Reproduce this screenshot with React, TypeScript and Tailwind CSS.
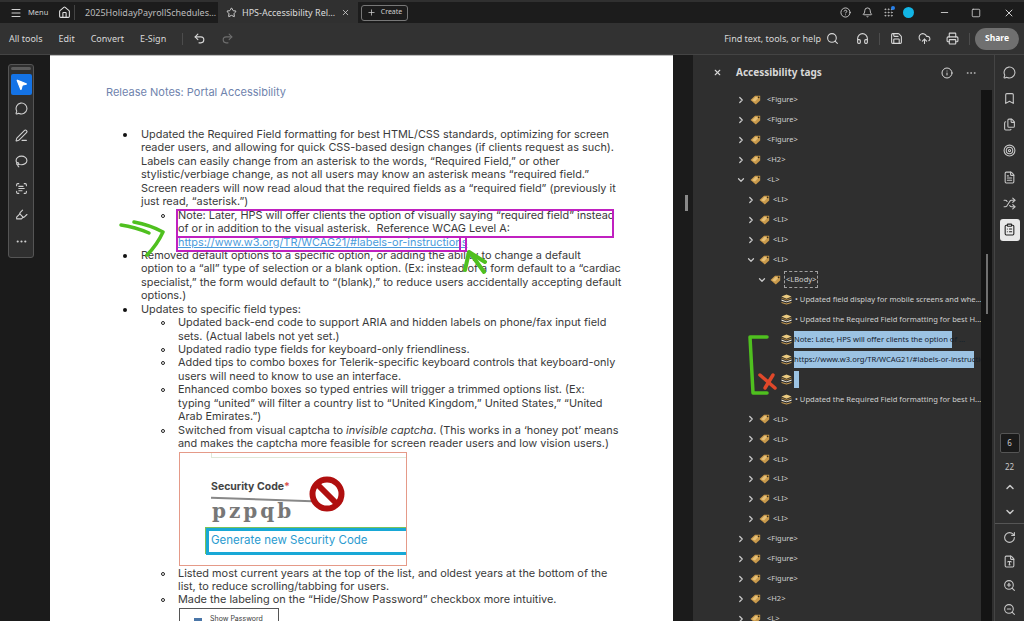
import {
  Bell, Bookmark, ChevronDown, ChevronRight, ChevronUp, CloudUpload, Ellipsis, FileText, Files, Grip,
  Headphones, Highlighter, Home, Info, Lasso, Menu, MessageCircle, Minus, MousePointer2, PenLine, Plus,
  Printer, RotateCw, Save, ScanText, Search, Square, Star, Target, Undo2, Redo2, X, ZoomIn, ZoomOut,
  CircleHelp, Shuffle, ClipboardList, FileType,
} from 'lucide-react'

const ui = "font-['Noto_Sans',sans-serif]"

function TagIcon() {
  return (
    <svg width="11" height="10" viewBox="0 0 11 10" className="shrink-0">
      <path d="M0.5 5 L5 0.8 H10.2 V5.4 L5.8 9.5 Z" fill="#c99a4b" />
      <path d="M2 5.2 L5.4 2 H9 L5 6.4 Z" fill="#e6c078" />
      <circle cx="8.6" cy="2.3" r="0.9" fill="#3a2c14" />
    </svg>
  )
}

function LeafIcon() {
  return (
    <svg width="11" height="11" viewBox="0 0 11 11" className="shrink-0">
      <path d="M0.5 2.6 L5.5 0.5 L10.5 2.6 L5.5 4.7 Z" fill="#eccb80" />
      <path d="M0.5 5.4 L5.5 7.4 L10.5 5.4 V6.8 L5.5 8.2 L0.5 6.8 Z" fill="#f2f0e6" />
      <path d="M0.5 8 L5.5 9.6 L10.5 8 V9 L5.5 10.6 L0.5 9 Z" fill="#c99a4b" />
      <path d="M0.5 3.4 L5.5 5.6 L10.5 3.4 V4.6 L5.5 6.6 L0.5 4.6 Z" fill="#a87f38" />
    </svg>
  )
}

function TreeRow({ label, level, open, dashed }: { label: string; level: 0 | 1 | 2; open?: boolean; dashed?: boolean }) {
  const pad = level === 0 ? 'pl-[43px] gap-[4px]' : level === 1 ? 'pl-[53px] gap-[3px]' : 'pl-[64px] gap-[3px]'
  return (
    <div className={`flex h-[19.96px] items-center ${pad}`}>
      {open ? (
        <ChevronDown className="h-[10px] w-[10px] shrink-0 text-[#c8c8c8]" strokeWidth={3} />
      ) : (
        <ChevronRight className="h-[10px] w-[10px] shrink-0 text-[#c8c8c8]" strokeWidth={3} />
      )}
      <TagIcon />
      <span
        className={`text-[7.5px] text-[#cfcfcf] ${level === 0 ? 'ml-[2px]' : ''} ${
          dashed ? 'border border-dashed border-[#a0a0a0] px-[1px] py-[2px]' : ''
        }`}
      >
        {label}
      </span>
    </div>
  )
}

function LeafRow({ label, selected, width }: { label: string; selected?: boolean; width?: string }) {
  return (
    <div className="flex h-[19.96px] items-center pl-[88px] gap-[2px]">
      <LeafIcon />
      {selected ? (
        <span className={`flex h-[17px] items-center whitespace-nowrap bg-[#9cc3e3] text-[7.6px] text-[#14202c] ${width}`}>
          {label}
        </span>
      ) : (
        <span className="whitespace-nowrap pl-[1px] text-[7.6px] text-[#cfcfcf]">{label}</span>
      )}
    </div>
  )
}

function Lines({ lines }: { lines: React.ReactNode[] }) {
  return (
    <>
      {lines.map((l, i) => (
        <div key={i} className="h-[13.45px] whitespace-pre leading-[13.45px]">
          {l}
        </div>
      ))}
    </>
  )
}

function Bullet({ lines }: { lines: React.ReactNode[] }) {
  return (
    <div className="relative pl-[91px]">
      <span className="absolute left-[73px] top-[5px] h-[4px] w-[4px] rounded-full bg-[#111]" />
      <Lines lines={lines} />
    </div>
  )
}

function Sub({ lines }: { lines: React.ReactNode[] }) {
  return (
    <div className="relative pl-[128px]">
      <span className="absolute left-[111px] top-[5px] h-[4px] w-[4px] rounded-full border border-[#222]" />
      <Lines lines={lines} />
    </div>
  )
}

function Captcha() {
  return (
    <div className="ml-[129px] mt-[1px] h-[114px] w-[228px] border border-[#e59a88] bg-white">
      <div className="relative h-full overflow-hidden pl-[31px] pt-[27px]">
        <div className="absolute left-[31px] top-0 h-[5px] w-[197px] border-b border-l border-[#dfe8d8]" />
        <div className="text-[10.5px] font-bold leading-[14px] text-[#444]">
          Security Code<span className="text-[#d9534f]">*</span>
        </div>
        <div className="relative mt-[3px] h-[30px] w-[130px]">
          <div className="absolute left-0 right-0 top-[2px] h-[2px] rotate-[2deg] bg-[#888]" />
          <div className="pl-[1px] font-['DejaVu_Serif',serif] text-[20px] font-bold leading-[28px] tracking-[3px] text-[#777]">
            pzpqb
          </div>
        </div>
        <div className="absolute bottom-[10px] left-[26px] flex h-[27px] w-[202px] items-center border-[3px] border-r-0 border-[#18a8d6] pl-[2px] text-[11.5px] text-[#2b9bd0] shadow-[-1px_-1px_0_#7cc35a]">
          Generate new Security Code
        </div>
        <svg width="36" height="36" viewBox="0 0 36 36" className="absolute left-[129px] top-[23px]">
          <circle cx="18" cy="18" r="14.5" fill="#fff" stroke="#b00f0f" strokeWidth="6" />
          <path d="M8 8 L28 28" stroke="#b00f0f" strokeWidth="6" />
        </svg>
      </div>
    </div>
  )
}

function RailIcon({ children, active }: { children: React.ReactNode; active?: boolean }) {
  return (
    <div className={`flex h-[22px] w-[20px] items-center justify-center rounded-[3px] ${active ? 'bg-[#e8e8e8] text-[#222]' : 'text-[#c8c8c8]'}`}>
      {children}
    </div>
  )
}

const tool = 'h-[13px] w-[13px]'
const top = 'h-[13px] w-[13px] text-[#d8d8d8]'
const rail = 'h-[13px] w-[13px]'

export default function App() {
  return (
    <div className={`relative flex h-[621px] w-[1024px] flex-col overflow-hidden bg-[#1b1b1b] ${ui}`}>
      {/* Title bar */}
      <div className="flex h-[23px] shrink-0 items-center border-t-2 border-[#303030] bg-[#1c1c1c] text-[#cfcfcf]">
        <div className="flex w-[54px] items-center gap-[6px] pl-[10px]">
          <Menu className="h-[12px] w-[12px]" />
          <span className="text-[7.5px]">Menu</span>
        </div>
        <Home className="ml-[4px] h-[13px] w-[13px] text-[#e0e0e0]" />
        <div className="ml-[3px] h-[15px] w-px bg-[#444]" />
        <div className="w-[143px] truncate pl-[10px] text-[9px] text-[#bdbdbd]">2025HolidayPayrollSchedules (3...</div>
        <div className="flex h-full w-[140px] items-center gap-[5px] bg-[#303030] pl-[8px] text-[9px] text-[#dcdcdc]">
          <Star className="h-[11px] w-[11px] shrink-0" />
          <span className="w-[94px] truncate">HPS-Accessibility Releas...</span>
          <X className="h-[9px] w-[9px] shrink-0" />
        </div>
        <div className="ml-[3px] flex h-[16px] w-[47px] items-center justify-center gap-[5px] rounded-[3px] border border-[#777] text-[7px]">
          <Plus className="h-[9px] w-[9px]" />
          Create
        </div>
        <div className="ml-auto flex items-center">
          <CircleHelp className="h-[11px] w-[11px]" />
          <Bell className="ml-[11px] h-[11px] w-[11px]" />
          <span className="relative ml-[10px]">
            <Grip className="h-[11px] w-[11px] text-[#bbb]" />
            <span className="absolute -right-[1px] -top-[1px] h-[4px] w-[4px] rounded-full bg-[#2680eb]" />
          </span>
          <span className="ml-[9px] h-[11px] w-[11px] rounded-full bg-[#12b5e5]" />
          <Minus className="ml-[25px] h-[11px] w-[11px]" />
          <Square className="ml-[21px] h-[10px] w-[10px]" />
          <X className="ml-[22px] mr-[9px] h-[12px] w-[12px]" />
        </div>
      </div>

      {/* Toolbar */}
      <div className="flex h-[32px] shrink-0 items-center border-b border-[#444] bg-[#323232] text-[9px] text-[#d8d8d8]">
        <span className="ml-[9px]">All tools</span>
        <span className="ml-[16px]">Edit</span>
        <span className="ml-[16px]">Convert</span>
        <span className="ml-[16px]">E-Sign</span>
        <div className="ml-[16px] h-[12px] w-px bg-[#4c4c4c]" />
        <Undo2 className={`ml-[10px] ${top}`} />
        <Redo2 className="ml-[15px] h-[13px] w-[13px] text-[#6e6e6e]" />
        <div className="ml-auto flex items-center">
          <span>Find text, tools, or help</span>
          <Search className={`ml-[5px] ${top}`} />
          <Headphones className={`ml-[17px] ${top}`} />
          <div className="ml-[10px] h-[12px] w-px bg-[#4c4c4c]" />
          <Save className={`ml-[10px] ${top}`} />
          <CloudUpload className={`ml-[15px] ${top}`} />
          <Printer className={`ml-[15px] ${top}`} />
          <div className="ml-[10px] h-[12px] w-px bg-[#4c4c4c]" />
          <span className="ml-[5px] mr-[5px] flex h-[22px] w-[44px] items-center justify-center rounded-full bg-[#707070] text-[8.5px] font-bold text-white">
            Share
          </span>
        </div>
      </div>

      <div className="flex min-h-0 flex-1">
        {/* Tool rail */}
        <div className="w-[50px] shrink-0 pl-[8px] pt-[9px]">
          <div className="flex h-[194px] w-[26px] flex-col items-center rounded-[3px] border border-[#555] bg-[#2f2f2f] pt-[2px] text-[#d0d0d0]">
            <div className="h-[3px] w-[20px] rounded-sm bg-[#5c5c5c]" />
            <div className="mt-[4px] flex h-[21px] w-[21px] items-center justify-center rounded-[2px] bg-[#1473e6] text-white">
              <MousePointer2 className={tool} fill="#fff" />
            </div>
            <div className="mt-[5px] flex flex-col items-center gap-[9.5px]">
              <MessageCircle className="h-[17px] w-[17px] p-[2px]" />
              <PenLine className="h-[17px] w-[17px] p-[2px]" />
              <Lasso className="h-[17px] w-[17px] p-[2px]" />
              <ScanText className="h-[17px] w-[17px] p-[2px]" />
              <Highlighter className="h-[17px] w-[17px] p-[2px]" />
              <Ellipsis className="h-[17px] w-[17px] p-[2px]" />
            </div>
          </div>
        </div>

        {/* Document page */}
        <div className="relative h-full w-[623px] shrink-0 overflow-hidden border-t border-[#bbb] bg-white font-['Inter',sans-serif] text-[10.9px] text-[#3a3a3a]">
          <div className="pl-[56px] pt-[29px] text-[11px] leading-[14px] text-[#6f83ad]">Release Notes: Portal Accessibility</div>
          <div className="pt-[29px]">
            <Bullet
              lines={[
                'Updated the Required Field formatting for best HTML/CSS standards, optimizing for screen',
                'reader users, and allowing for quick CSS-based design changes (if clients request as such).',
                'Labels can easily change from an asterisk to the words, “Required Field,” or other',
                'stylistic/verbiage change, as not all users may know an asterisk means “required field.”',
                'Screen readers will now read aloud that the required fields as a “required field” (previously it',
                'just read, “asterisk.”)',
              ]}
            />
            <Sub
              lines={[
                'Note: Later, HPS will offer clients the option of visually saying “required field” instead',
                'of or in addition to the visual asterisk.  Reference WCAG Level A:',
                <span className="text-[#4a9bdc] underline">https://www.w3.org/TR/WCAG21/#labels-or-instructions</span>,
              ]}
            />
            <Bullet
              lines={[
                'Removed default options to a specific option, or adding the ability to change a default',
                'option to a “all” type of selection or a blank option. (Ex: instead of a form default to a “cardiac',
                'specialist,” the form would default to “(blank),” to reduce users accidentally accepting default',
                'options.)',
              ]}
            />
            <Bullet lines={['Updates to specific field types:']} />
            <Sub lines={['Updated back-end code to support ARIA and hidden labels on phone/fax input field', 'sets. (Actual labels not yet set.)']} />
            <Sub lines={['Updated radio type fields for keyboard-only friendliness.']} />
            <Sub lines={['Added tips to combo boxes for Telerik-specific keyboard controls that keyboard-only', 'users will need to know to use an interface.']} />
            <Sub
              lines={[
                'Enhanced combo boxes so typed entries will trigger a trimmed options list. (Ex:',
                'typing “united” will filter a country list to “United Kingdom,” United States,” “United',
                'Arab Emirates.”)',
              ]}
            />
            <Sub
              lines={[
                <>
                  Switched from visual captcha to <em>invisible captcha</em>. (This works in a ‘honey pot’ means
                </>,
                'and makes the captcha more feasible for screen reader users and low vision users.)',
              ]}
            />
            <Captcha />
            <div className="h-[0px]" />
            <div className="pt-[1px]">
              <Sub lines={['Listed most current years at the top of the list, and oldest years at the bottom of the', 'list, to reduce scrolling/tabbing for users.']} />
              <Sub lines={['Made the labeling on the “Hide/Show Password” checkbox more intuitive.']} />
            </div>
            <div className="ml-[129px] mt-[1px] flex h-[30px] w-[100px] items-start gap-[8px] border border-[#555] pl-[14px] pt-[5px] text-[7px]">
              <span className="mt-[4px] h-[6px] w-[8px] bg-[#4a76a8]" />
              Show Password
            </div>
          </div>
        </div>

        {/* Gutter */}
        <div className="flex w-[20px] shrink-0 items-start justify-end pr-[5px] pt-[140px]">
          <div className="h-[16px] w-[3px] bg-[#8a8a8a]" />
        </div>

        {/* Tags panel */}
        <div className="flex w-[302px] shrink-0 flex-col border-r border-[#444] bg-[#2f2f2f]">
          <div className="flex h-[35px] shrink-0 items-center text-[#d8d8d8]">
            <X className="ml-[20px] h-[9px] w-[9px]" strokeWidth={3} />
            <span className="ml-[14px] text-[10px] font-bold">Accessibility tags</span>
            <Info className="ml-auto h-[12px] w-[12px]" />
            <Ellipsis className="ml-[12px] mr-[17px] h-[12px] w-[12px] text-[#aaa]" />
          </div>
          <div className="relative min-h-0 flex-1 overflow-hidden">
            <div className="absolute bottom-0 right-[2px] top-0 w-[11px] bg-[#141414]">
              <div className="ml-[5px] mt-[164px] h-[60px] w-[2px] bg-[#707070]" />
            </div>
            <TreeRow label="<Figure>" level={0} />
            <TreeRow label="<Figure>" level={0} />
            <TreeRow label="<Figure>" level={0} />
            <TreeRow label="<H2>" level={0} />
            <TreeRow label="<L>" level={0} open />
            <TreeRow label="<LI>" level={1} />
            <TreeRow label="<LI>" level={1} />
            <TreeRow label="<LI>" level={1} />
            <TreeRow label="<LI>" level={1} open />
            <TreeRow label="<LBody>" level={2} open dashed />
            <LeafRow label="• Updated field display for mobile screens and whe..." />
            <LeafRow label="• Updated the Required Field formatting for best H..." />
            <LeafRow label="Note: Later, HPS will offer clients the option of ..." selected width="w-[158px]" />
            <LeafRow label="https://www.w3.org/TR/WCAG21/#labels-or-instructio..." selected width="w-[180px]" />
            <LeafRow label="" selected width="w-[5px]" />
            <LeafRow label="• Updated the Required Field formatting for best H..." />
            <TreeRow label="<LI>" level={1} />
            <TreeRow label="<LI>" level={1} />
            <TreeRow label="<LI>" level={1} />
            <TreeRow label="<LI>" level={1} />
            <TreeRow label="<LI>" level={1} />
            <TreeRow label="<LI>" level={1} />
            <TreeRow label="<Figure>" level={0} />
            <TreeRow label="<Figure>" level={0} />
            <TreeRow label="<Figure>" level={0} />
            <TreeRow label="<H2>" level={0} />
            <TreeRow label="<L>" level={0} />
          </div>
        </div>

        {/* Right rail */}
        <div className="flex w-[29px] shrink-0 flex-col items-center justify-between bg-[#2f2f2f] pb-[1px] pt-[6px] text-[#c8c8c8]">
          <div className="flex flex-col items-center gap-[4.3px]">
            <RailIcon><MessageCircle className={rail} /></RailIcon>
            <RailIcon><Bookmark className={rail} /></RailIcon>
            <RailIcon><Files className={rail} /></RailIcon>
            <RailIcon><Target className={rail} /></RailIcon>
            <RailIcon><FileText className={rail} /></RailIcon>
            <RailIcon><Shuffle className={rail} /></RailIcon>
            <RailIcon active><ClipboardList className={rail} /></RailIcon>
          </div>
          <div className="flex w-full flex-col items-center text-[8px]">
            <div className="flex h-[20px] w-[20px] items-center justify-center rounded-[2px] border border-[#555] bg-[#1a1a1a]">6</div>
            <div className="mt-[4px] flex h-[20px] items-center">22</div>
            <ChevronUp className="mt-[4px] h-[12px] w-[12px]" strokeWidth={3} />
            <ChevronDown className="mt-[13px] h-[12px] w-[12px]" strokeWidth={3} />
            <div className="mt-[5px] h-px w-full bg-[#555]" />
            <div className="mt-[2px] flex flex-col items-center gap-[2px]">
              <RailIcon><RotateCw className={rail} /></RailIcon>
              <RailIcon><FileType className={rail} /></RailIcon>
              <RailIcon><ZoomIn className={rail} /></RailIcon>
              <RailIcon><ZoomOut className={rail} /></RailIcon>
            </div>
          </div>
        </div>
      </div>

      {/* Hand drawn markup on top of the window */}
      <svg width="1024" height="621" viewBox="0 0 1024 621" fill="none" className="pointer-events-none absolute left-0 top-0">
        <path d="M177 210 H613 V237 H177 Z" stroke="#c020c0" strokeWidth="2" />
        <path d="M177 237 V251 H466 V237 M460 237 V251" stroke="#c020c0" strokeWidth="2" />
        <g stroke="#4fc01f" strokeLinecap="round" strokeLinejoin="round">
          <path d="M121 225 Q135 227 149 233" strokeWidth="3.5" />
          <path d="M134 222 Q150 225 163 232 Q157 245 147 255" strokeWidth="3.5" />
          <path d="M484 272 L471 254" strokeWidth="4" />
          <path d="M465 270 L469 252 L485 262" strokeWidth="4" />
          <path d="M767 337 H750 L753 393 H767" strokeWidth="3.5" />
        </g>
        <g stroke="#e0482a" strokeLinecap="round">
          <path d="M760 375 L775 388" strokeWidth="3.5" />
          <path d="M773 375 L765 388" strokeWidth="3.5" />
        </g>
      </svg>
    </div>
  )
}
